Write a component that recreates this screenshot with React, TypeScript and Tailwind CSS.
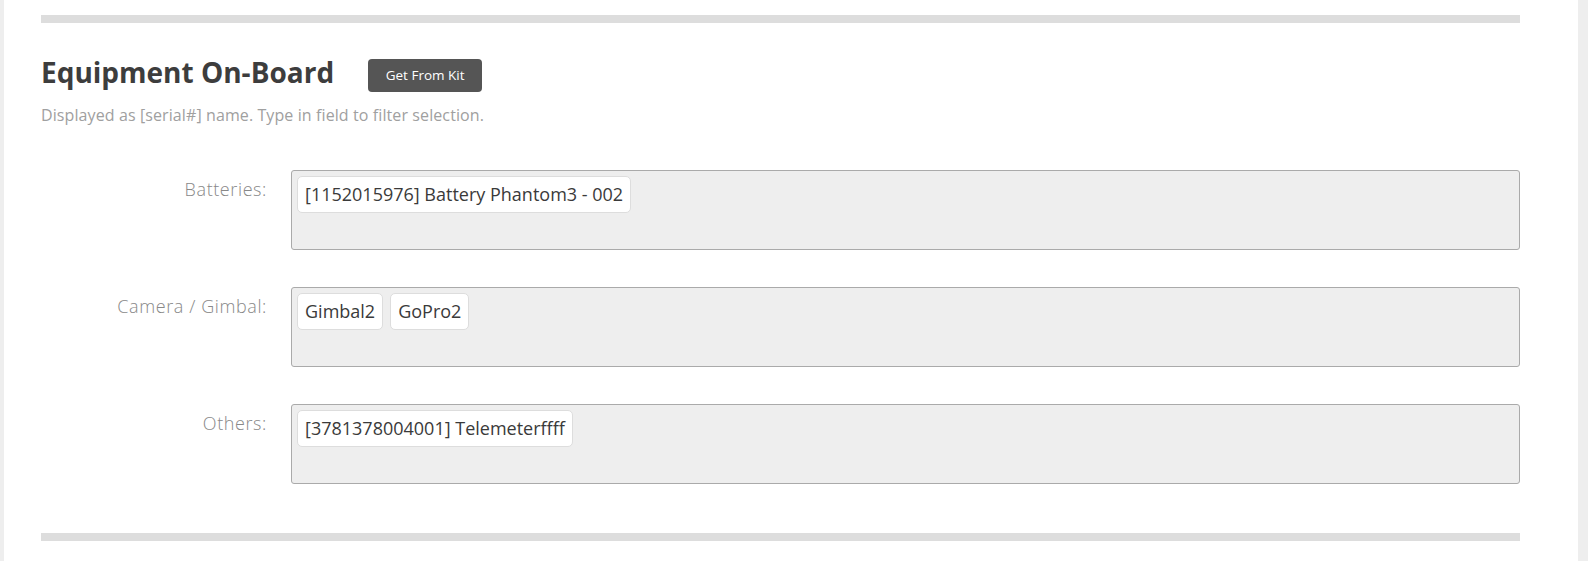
const rows = [
  { label: 'Batteries:', tags: ['[1152015976] Battery Phantom3 - 002'] },
  { label: 'Camera / Gimbal:', tags: ['Gimbal2', 'GoPro2'] },
  { label: 'Others:', tags: ['[3781378004001] Telemeterffff'] },
]

export default function App() {
  return (
    <div className="flex h-[561px] w-[1588px] bg-[#eeeeee] font-['Open_Sans','Noto_Sans',sans-serif]">
      <div className="ml-[4px] w-[1574px] bg-white pt-[15px] pl-[37px]">
        <div className="w-[1479px]">
          <div className="h-[8px] bg-[#dddddd]" />

          <div className="mt-[32px] flex items-start">
            <h2 className="text-[28px] leading-[34px] font-bold text-[#3d3d3d]">Equipment On-Board</h2>
            <button className="mt-[4px] ml-[34px] h-[33px] w-[114px] rounded-[4px] bg-[#555555] text-[13.5px] text-white">
              Get From Kit
            </button>
          </div>
          <p className="mt-[12px] text-[16px] leading-[22px] tracking-[0.1px] text-[#a0a0a0]">
            Displayed as [serial#] name. Type in field to filter selection.
          </p>

          <div className="mt-[44px] flex flex-col gap-[37px]">
            {rows.map((r) => (
              <div key={r.label} className="flex">
                <div className="w-[226px] pt-[7px] text-right text-[18px] leading-[24px] font-light tracking-[0.6px] text-[#888888]">
                  {r.label}
                </div>
                <div className="ml-[24px] flex h-[80px] flex-1 items-start gap-[7px] rounded-[3px] border border-[#aaaaaa] bg-[#eeeeee] p-[5px]">
                  {r.tags.map((t) => (
                    <span
                      key={t}
                      className="rounded-[5px] border border-[#dddddd] bg-white px-[7px] py-[5px] text-[18px] leading-[25px] text-[#3a3a3a]"
                    >
                      {t}
                    </span>
                  ))}
                </div>
              </div>
            ))}
          </div>

          <div className="mt-[49px] h-[8px] bg-[#dddddd]" />
        </div>
      </div>
    </div>
  )
}
